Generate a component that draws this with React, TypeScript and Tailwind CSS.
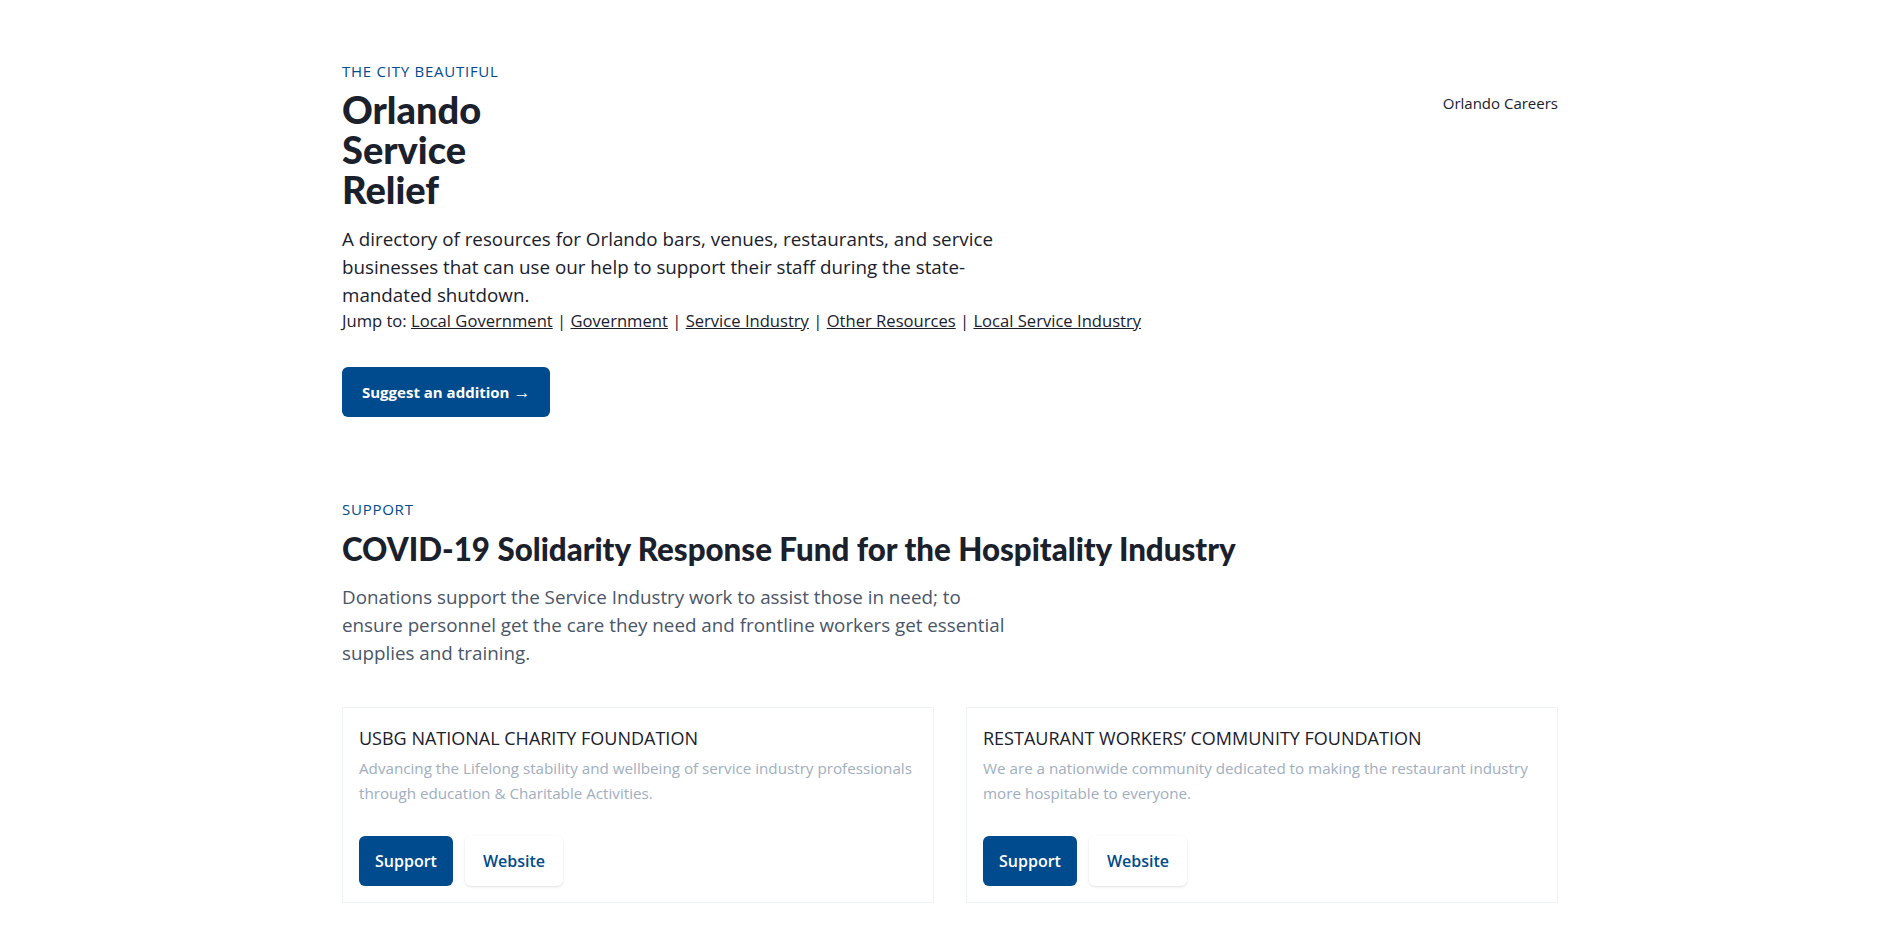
const links = [
  "Local Government",
  "Government",
  "Service Industry",
  "Other Resources",
  "Local Service Industry",
];

const funds = [
  {
    name: "USBG National Charity Foundation",
    text: "Advancing the Lifelong stability and wellbeing of service industry professionals through education & Charitable Activities.",
  },
  {
    name: "Restaurant Workers’ Community Foundation",
    text: "We are a nationwide community dedicated to making the restaurant industry more hospitable to everyone.",
  },
];

export default function App() {
  return (
    <div className="min-h-screen bg-white pl-[5px] font-['Open_Sans','Noto_Sans',sans-serif] text-[#1a202c]">
      <div className="mx-auto max-w-7xl px-8 pt-[61px]">
        <header>
          <div className="flex items-start justify-between">
            <div>
              <p className="text-[15px] leading-5 font-medium uppercase tracking-wider text-[#004b8d]">
                The City Beautiful
              </p>
              <h1 className="mt-2 w-48 font-['Lato',sans-serif] text-[38px] leading-10 font-black text-[#1a202c]">
                Orlando Service Relief
              </h1>
            </div>
            <a href="#" className="mt-8 text-[15px] leading-5 text-[#1a202c]">
              Orlando Careers
            </a>
          </div>
          <p className="mt-4 max-w-2xl text-[18.8px] leading-7">
            A directory of resources for Orlando bars, venues, restaurants, and service businesses that can use our help
            to support their staff during the state-mandated shutdown.
          </p>
          <p className="text-[16.6px] leading-6">
            Jump to:{" "}
            {links.map((l, i) => (
              <span key={l}>
                <a href="#" className="underline">
                  {l}
                </a>
                {i < links.length - 1 && " | "}
              </span>
            ))}
          </p>
          <a
            href="#"
            className="mt-[34px] inline-flex h-[50px] items-center rounded-md bg-[#004b8d] px-5 text-[15px] font-bold text-white"
          >
            Suggest an addition <span className="ml-1 text-[17px]">→</span>
          </a>
        </header>

        <section className="mt-[82px]">
          <p className="text-[15px] leading-5 font-medium uppercase tracking-wider text-[#004b8d]">Support</p>
          <h2 className="mt-3 font-['Lato',sans-serif] text-[31.3px] leading-9 font-black text-[#1a202c]">
            COVID-19 Solidarity Response Fund for the Hospitality Industry
          </h2>
          <p className="mt-4 max-w-2xl text-[18.8px] leading-7 text-[#4a5568]">
            Donations support the Service Industry work to assist those in need; to ensure personnel get the care they
            need and frontline workers get essential supplies and training.
          </p>

          <div className="mt-10 grid grid-cols-2 gap-8">
            {funds.map((f) => (
              <div key={f.name} className="border border-[#edf2f7] p-4">
                <h3 className="text-[18px] leading-7 uppercase text-[#1a202c]">{f.name}</h3>
                <p className="mt-1 text-[15.2px] leading-[25px] text-[#a0aec0]">{f.text}</p>
                <div className="mt-[30px] flex gap-3">
                  <a
                    href="#"
                    className="inline-flex h-[50px] items-center rounded-md bg-[#004b8d] px-4 text-base font-semibold text-white"
                  >
                    Support
                  </a>
                  <a
                    href="#"
                    className="inline-flex h-[50px] items-center rounded-md bg-white px-[18px] text-base font-semibold text-[#004b8d] shadow"
                  >
                    Website
                  </a>
                </div>
              </div>
            ))}
          </div>
        </section>
      </div>
    </div>
  );
}
